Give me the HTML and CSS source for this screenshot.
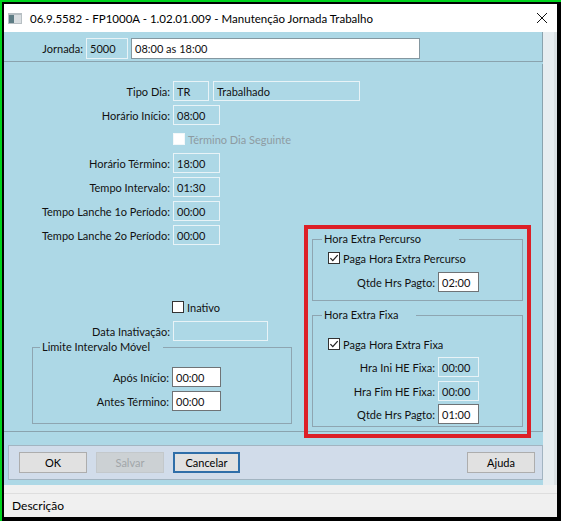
FILE: index.html
```html
<!DOCTYPE html>
<html lang="pt">
<head>
<meta charset="utf-8">
<title>Manutenção Jornada Trabalho</title>
<link rel="stylesheet" href="styles.css">
</head>
<body>
<div class="frame">
  <div class="window">
    <div class="titlebar">
      <svg class="app-icon" width="14" height="11" viewBox="0 0 14 11"><rect x="0" y="0" width="14" height="11" fill="#b7bfc3"/><rect x="1" y="2" width="5" height="8" fill="#5d7c84"/><rect x="6" y="2" width="7" height="8" fill="#d9dee1"/></svg>
      <span class="title">06.9.5582 - FP1000A - 1.02.01.009 - Manutenção Jornada Trabalho</span>
      <svg class="close" width="10" height="10" viewBox="0 0 10 10"><path d="M0 0L10 10M10 0L0 10" stroke="#111" stroke-width="1"/></svg>
    </div>
    <div class="client">
      <div class="main-col">
        <div class="panel-top">
          <span class="jornada-label">Jornada:</span>
          <span class="field ro f-code">5000</span>
          <span class="field desc f-desc">08:00 as 18:00</span>
        </div>
        <div class="panel-main">
          <div class="col-left">
            <div class="row"><span class="lbl">Tipo Dia:</span><span class="field ro f-tr">TR</span><span class="field ro f-trab">Trabalhado</span></div>
            <div class="row"><span class="lbl">Horário Início:</span><span class="field ro f-time">08:00</span></div>
            <div class="row check-row">
              <svg class="cb" width="12" height="12" viewBox="0 0 12 12"><rect x="0.5" y="0.5" width="11" height="11" fill="#fff" stroke="#f2f7f9"/></svg>
              <span class="cb-text disabled">Término Dia Seguinte</span>
            </div>
            <div class="row"><span class="lbl">Horário Término:</span><span class="field ro f-time">18:00</span></div>
            <div class="row"><span class="lbl">Tempo Intervalo:</span><span class="field ro f-time">01:30</span></div>
            <div class="row"><span class="lbl">Tempo Lanche 1o Período:</span><span class="field ro f-time">00:00</span></div>
            <div class="row"><span class="lbl">Tempo Lanche 2o Período:</span><span class="field ro f-time">00:00</span></div>
            <div class="row check-row inativo-row">
              <svg class="cb" width="12" height="12" viewBox="0 0 12 12"><rect x="0.5" y="0.5" width="11" height="11" fill="#fff" stroke="#333"/></svg>
              <span class="cb-text">Inativo</span>
            </div>
            <div class="row"><span class="lbl">Data Inativação:</span><span class="field ro f-date"></span></div>
            <fieldset class="group group-limit">
              <legend class="legend-limit">Limite Intervalo Móvel</legend>
              <div class="row"><span class="lbl lbl-limit">Após Início:</span><span class="field edit f-time2">00:00</span></div>
              <div class="row"><span class="lbl lbl-limit">Antes Término:</span><span class="field edit f-time2">00:00</span></div>
            </fieldset>
          </div>
          <div class="col-right">
            <fieldset class="group group-perc">
              <legend class="legend-perc">Hora Extra Percurso</legend>
              <div class="row check-row2">
                <svg class="cb" width="12" height="12" viewBox="0 0 12 12"><rect x="0.5" y="0.5" width="11" height="11" fill="#fff" stroke="#333"/><path d="M2.4 6.1L4.8 8.6L9.7 3.1" fill="none" stroke="#222" stroke-width="1.3"/></svg>
                <span class="cb-text">Paga Hora Extra Percurso</span>
              </div>
              <div class="row row-qtde"><span class="lbl lbl-he">Qtde Hrs Pagto:</span><span class="field edit f-he">02:00</span></div>
            </fieldset>
            <fieldset class="group group-fixa">
              <legend class="legend-fixa">Hora Extra Fixa</legend>
              <div class="row check-row2">
                <svg class="cb" width="12" height="12" viewBox="0 0 12 12"><rect x="0.5" y="0.5" width="11" height="11" fill="#fff" stroke="#333"/><path d="M2.4 6.1L4.8 8.6L9.7 3.1" fill="none" stroke="#222" stroke-width="1.3"/></svg>
                <span class="cb-text">Paga Hora Extra Fixa</span>
              </div>
              <div class="row row-ini"><span class="lbl lbl-he">Hra Ini HE Fixa:</span><span class="field ro f-he">00:00</span></div>
              <div class="row row-fim"><span class="lbl lbl-he">Hra Fim HE Fixa:</span><span class="field ro f-he">00:00</span></div>
              <div class="row row-qtde2"><span class="lbl lbl-he">Qtde Hrs Pagto:</span><span class="field edit f-he">01:00</span></div>
            </fieldset>
          </div>
          <div class="highlight"></div>
        </div>
        <div class="button-bar">
          <span class="btn">OK</span>
          <span class="btn disabled">Salvar</span>
          <span class="btn focus">Cancelar</span>
          <span class="btn help">Ajuda</span>
        </div>
      </div>
      <div class="side-strip"></div>
    </div>
    <div class="status">
      <div class="status-inner">Descrição</div>
    </div>
  </div>
</div>
</body>
</html>
```

FILE: styles.css
```css
* { box-sizing: border-box; }
html, body { margin: 0; padding: 0; }
body {
  width: 561px;
  height: 521px;
  overflow: hidden;
  background: #000;
  font-family: Lato, "Liberation Sans", sans-serif;
  font-size: 11px;
  color: #111;
}
.frame {
  width: 561px;
  height: 521px;
  border-top: 2px solid #00d41e;
  border-left: 2px solid #00d41e;
  padding: 2px 4px 4px 2px;
  background: #000;
}
.window {
  width: 553px;
  height: 513px;
  background: #fff;
  display: flex;
  flex-direction: column;
}
.titlebar {
  height: 28px;
  flex: none;
  display: flex;
  align-items: center;
  padding-left: 4px;
  background: #fff;
}
.app-icon { margin-right: 8px; flex: none; }
.title { flex: 1; font-size: 11.5px; color: #000; white-space: nowrap; }
.close { margin-right: 10px; flex: none; }

.client { display: flex; height: 453px; flex: none; }
.main-col {
  width: 539px;
  background: #add8e6;
  display: flex;
  flex-direction: column;
}
.side-strip {
  flex: 1;
  background: #e7edf0;
  border-right: 3px solid #dbe1e4;
}

.panel-top {
  height: 30px;
  flex: none;
  border-bottom: 1px solid #8aa3ae;
  border-right: 1px solid #8aa3ae;
  display: flex;
  align-items: flex-start;
  padding-top: 6px;
}
.jornada-label {
  width: 82px;
  text-align: right;
  padding-right: 3px;
  line-height: 21px;
}
.field {
  height: 20px;
  padding: 0 3px;
  display: flex;
  align-items: center;
  white-space: nowrap;
  flex: none;
}
.field.ro { background: transparent; border: 1px solid #e8f3f7; }
.field.edit { background: #fff; border: 1px solid #6f7376; }
.field.desc { background: #fff; border: 1px solid #8497a0; }
.f-code { width: 42px; height: 21px; }
.f-desc { width: 289px; height: 21px; margin-left: 3px; }
.f-tr { width: 36px; }
.f-trab { width: 147px; margin-left: 4px; }
.f-time { width: 47px; }
.f-time2 { width: 49px; }
.f-date { width: 95px; }
.f-he { width: 41px; }

.panel-main {
  margin-top: 2px;
  height: 368px;
  flex: none;
  border-right: 1px solid #8aa3ae;
  border-bottom: 1px solid #8aa3ae;
  display: grid;
  grid-template-columns: 300px 1fr;
  align-items: start;
  position: relative;
}
.col-left {
  padding-top: 17px;
  display: flex;
  flex-direction: column;
}
.col-left > .row + .row { margin-top: 4px; }
.row {
  display: flex;
  align-items: center;
  height: 20px;
}
.lbl {
  width: 169px;
  text-align: right;
  padding-right: 3px;
  white-space: nowrap;
  flex: none;
}
.check-row { padding-left: 169px; }
.cb { flex: none; margin-right: 3px; }
.cb-text { white-space: nowrap; }
.cb-text.disabled { color: #8d9ba2; }
.col-left > .row.inativo-row { margin-top: 52px; padding-left: 168px; }

.group {
  margin: 0;
  border: 1px solid #8ea5b1;
  padding: 0;
  min-width: 0;
}
.group legend {
  line-height: 14px;
  font-size: 11px;
  padding: 0 13px 0 2px;
  margin-left: 7px;
  white-space: nowrap;
}
.group-limit {
  margin: -1px 0 0 28px;
  width: 260px;
  padding: 13px 0 12px 0;
}
.group-limit .row + .row { margin-top: 4px; }
.lbl-limit { width: 139px; }

.col-right {
  padding-top: 168px;
  padding-left: 8px;
}
.group-perc {
  width: 211px;
  padding: 4px 0 8px 0;
}
.group .legend-perc { margin-left: 9px; padding-right: 38px; }
.group .legend-fixa { margin-left: 9px; padding-right: 18px; }
.check-row2 { height: 16px; padding-left: 15px; }
.row-qtde { margin-top: 6px; }
.lbl-he { width: 125px; }
.group-fixa {
  width: 211px;
  margin-top: 7px;
  padding: 14px 0 2px 0;
}
.row-ini { margin-top: 5px; }
.row-fim { margin-top: 4px; }
.row-qtde2 { margin-top: 3px; }

.highlight {
  position: absolute;
  left: 300px;
  top: 161px;
  width: 227px;
  height: 213px;
  border: 4px solid #dc1f27;
  pointer-events: none;
}

.button-bar {
  margin: 13px 0 0 4px;
  width: 535px;
  height: 35px;
  flex: none;
  background: #d1dcea;
  border: 1px solid #a2b4c1;
  display: flex;
  align-items: flex-start;
  padding: 6px 7px 0 10px;
  gap: 9px;
}
.btn {
  width: 68px;
  height: 21px;
  background: #e1e1e1;
  border: 1px solid #adadad;
  display: flex;
  align-items: center;
  justify-content: center;
  color: #000;
}
.btn.disabled { background: #ccd1d4; border-color: #c3c8cb; color: #a1a6a9; }
.btn.focus { width: 67px; border: 2px solid #2f6ea8; }
.btn.help { margin-left: auto; }

.status {
  flex: 1;
  background: #f0f0f0;
  padding-top: 8px;
}
.status-inner {
  border-top: 1px solid #dedede;
  padding: 3px 0 0 8px;
  line-height: 18px;
  font-size: 12px;
  color: #000;
}
```
